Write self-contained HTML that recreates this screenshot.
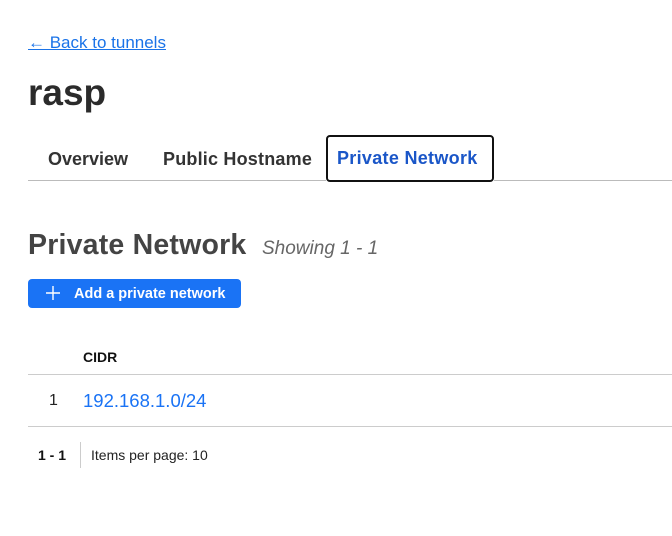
<!DOCTYPE html>
<html><head><meta charset="utf-8"><style>
html,body{margin:0;padding:0;width:672px;height:536px;background:#fff;overflow:hidden;font-family:"Liberation Sans",sans-serif;color:#2b2b2b}
.a{position:absolute;white-space:nowrap}
</style></head><body>
<div class="a" style="left:28px;top:33px;font-size:17px;color:#1a73e8;text-decoration:underline">← Back to tunnels</div>
<div class="a" style="left:28px;top:72px;font-size:37px;font-weight:bold;color:#2b2b2b">rasp</div>
<div class="a" style="left:48px;top:149px;font-size:18px;font-weight:bold;color:#333">Overview</div>
<div class="a" style="left:163px;top:149px;font-size:18px;font-weight:bold;color:#333;letter-spacing:0.2px">Public Hostname</div>
<div class="a" style="left:326px;top:135px;width:168px;height:47px;border:2px solid #111;border-radius:4px;box-sizing:border-box;background:#fff"></div>
<div class="a" style="left:337px;top:148px;font-size:18px;font-weight:bold;color:#1a56c8;letter-spacing:0.3px">Private Network</div>
<div class="a" style="left:28px;top:180px;width:298px;height:1px;background:#bbb"></div>
<div class="a" style="left:494px;top:180px;width:178px;height:1px;background:#bbb"></div>
<div class="a" style="left:28px;top:229px;font-size:28.5px;font-weight:bold;color:#444;letter-spacing:0.2px">Private Network</div>
<div class="a" style="left:262px;top:238px;font-size:19px;font-style:italic;color:#666">Showing 1 - 1</div>
<div class="a" style="left:28px;top:279px;width:213px;height:29px;background:#1a73f5;border-radius:4px"></div>
<svg class="a" style="left:45px;top:285px" width="16" height="16"><path d="M8 1V15M1 8H15" stroke="#fff" stroke-width="1.4"/></svg>
<div class="a" style="left:74px;top:286px;font-size:14.5px;font-weight:bold;color:#fff">Add a private network</div>
<div class="a" style="left:83px;top:349px;font-size:14px;font-weight:bold;color:#111">CIDR</div>
<div class="a" style="left:28px;top:374px;width:644px;height:1px;background:#ccc"></div>
<div class="a" style="left:49px;top:392px;font-size:16px;color:#222">1</div>
<div class="a" style="left:83px;top:390px;font-size:18.5px;color:#1a73f5">192.168.1.0/24</div>
<div class="a" style="left:28px;top:426px;width:644px;height:1px;background:#ccc"></div>
<div class="a" style="left:38px;top:447px;font-size:14px;font-weight:bold;color:#111">1 - 1</div>
<div class="a" style="left:80px;top:442px;width:1px;height:26px;background:#ccc"></div>
<div class="a" style="left:91px;top:447px;font-size:14px;color:#222">Items per page: 10</div>
</body></html>
